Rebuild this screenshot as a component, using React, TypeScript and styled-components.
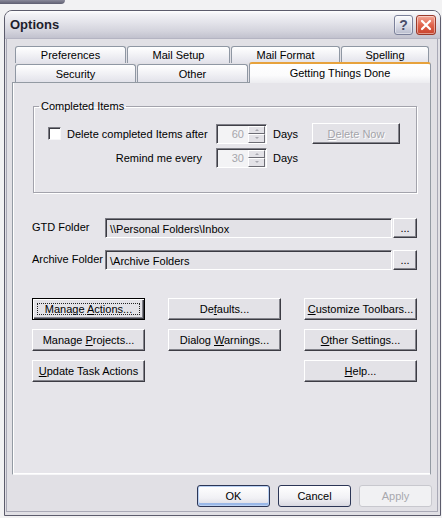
import type { ReactNode } from "react";
import styled, { createGlobalStyle } from "styled-components";

const GlobalStyle = createGlobalStyle`
  html, body {
    margin: 0;
    padding: 0;
  }
  body {
    background: #f2f2f3;
    font-family: "Liberation Sans", Arial, sans-serif;
    font-size: 11px;
    color: #000;
  }
  * {
    box-sizing: border-box;
  }
`;

const topTabs = [
    { label: "Preferences", width: 111 },
    { label: "Mail Setup", width: 103 },
    { label: "Mail Format", width: 109 },
    { label: "Spelling", width: 88 },
];

const bottomTabs = [
    { label: "Security", width: 121 },
    { label: "Other", width: 111 },
];

function Spin({ value }: { value: string }) {
    return (
        <Spinner>
            <SpinInput>{value}</SpinInput>
            <SpinArrows>
                <SpinArrow>
                    <Triangle $up />
                </SpinArrow>
                <SpinArrow>
                    <Triangle />
                </SpinArrow>
            </SpinArrows>
        </Spinner>
    );
}

function Button({
    children,
    isDefault,
    disabled,
}: {
    children: ReactNode;
    isDefault?: boolean;
    disabled?: boolean;
}) {
    return (
        <ClassicButton $default={isDefault} $disabled={disabled}>
            {isDefault ? (
                <FocusRing>
                    <span>{children}</span>
                </FocusRing>
            ) : (
                <span>{children}</span>
            )}
        </ClassicButton>
    );
}

function App() {
    return (
        <Page>
            <GlobalStyle />
            <TopStrip />
            <Window>
                <TitleBar>
                    <Title>Options</Title>
                    <CaptionButton $variant="help">?</CaptionButton>
                    <CaptionButton $variant="close">
                        <svg width="12" height="12" viewBox="0 0 12 12">
                            <path d="M2 2 L10 10 M10 2 L2 10" stroke="#fff" strokeWidth="2.2" strokeLinecap="round" />
                        </svg>
                    </CaptionButton>
                </TitleBar>
                <Body>
                    <TabRows>
                        <TabRow $height={17}>
                            {topTabs.map((t) => (
                                <Tab key={t.label} $width={t.width}>
                                    {t.label}
                                </Tab>
                            ))}
                        </TabRow>
                        <TabRow $height={18}>
                            {bottomTabs.map((t) => (
                                <Tab key={t.label} $width={t.width}>
                                    {t.label}
                                </Tab>
                            ))}
                            <SelectedTab>Getting Things Done</SelectedTab>
                        </TabRow>
                    </TabRows>
                    <Panel>
                        <GroupBox>
                            <Legend>Completed Items</Legend>
                            <GroupGrid>
                                <CheckLabel>
                                    <CheckBox />
                                    <span>Delete completed Items after</span>
                                </CheckLabel>
                                <Spin value="60" />
                                <span>Days</span>
                                <Button disabled>
                                    <u>D</u>elete Now
                                </Button>
                                <RightLabel>Remind me every</RightLabel>
                                <Spin value="30" />
                                <span>Days</span>
                            </GroupGrid>
                        </GroupBox>
                        <FolderGrid>
                            <FolderLabel>GTD Folder</FolderLabel>
                            <FolderBox>\\Personal Folders\Inbox</FolderBox>
                            <Button>...</Button>
                            <FolderLabel>Archive Folder</FolderLabel>
                            <FolderBox>\Archive Folders</FolderBox>
                            <Button>...</Button>
                        </FolderGrid>
                        <ActionGrid>
                            <Button isDefault>
                                Manage <u>A</u>ctions...
                            </Button>
                            <Button>
                                De<u>f</u>aults...
                            </Button>
                            <Button>
                                <u>C</u>ustomize Toolbars...
                            </Button>
                            <Button>
                                Manage <u>P</u>rojects...
                            </Button>
                            <Button>
                                Dialog <u>W</u>arnings...
                            </Button>
                            <Button>
                                <u>O</u>ther Settings...
                            </Button>
                            <Button>
                                <u>U</u>pdate Task Actions
                            </Button>
                            <span />
                            <Button>
                                <u>H</u>elp...
                            </Button>
                        </ActionGrid>
                    </Panel>
                    <Footer>
                        <XPButton $default>OK</XPButton>
                        <XPButton>Cancel</XPButton>
                        <XPButton $disabled>Apply</XPButton>
                    </Footer>
                </Body>
            </Window>
        </Page>
    );
}

export default App;

const Page = styled.div`
    width: 442px;
    height: 518px;
    padding-left: 4px;
    overflow: hidden;
`;

const TopStrip = styled.div`
    width: 65px;
    height: 4px;
    margin-left: -4px;
    background: linear-gradient(to bottom, #8a8a9a, #5e5e70);
    border-radius: 0 0 4px 0;
`;

const Window = styled.div`
    margin-top: 6px;
    width: 437px;
    height: 506px;
    border: 1px solid #5c5c6c;
    border-radius: 8px 8px 0 0;
    background: #e1e0e5;
    display: flex;
    flex-direction: column;
    overflow: hidden;
`;

const TitleBar = styled.div`
    height: 28px;
    flex-shrink: 0;
    display: flex;
    align-items: center;
    gap: 3px;
    padding: 0 4px 0 5px;
    background: linear-gradient(
        to bottom,
        #ffffff 0%,
        #f2f2f6 12%,
        #e2e2e9 45%,
        #d3d3dc 75%,
        #c2c2ce 100%
    );
    border-bottom: 1px solid #b4b4c2;
`;

const Title = styled.div`
    flex: 1;
    font-size: 13px;
    font-weight: bold;
    color: #1e1e2c;
`;

const CaptionButton = styled.div<{ $variant: "help" | "close" }>`
    width: ${(p) => (p.$variant === "help" ? 19 : 20)}px;
    height: 20px;
    border-radius: 3px;
    display: flex;
    align-items: center;
    justify-content: center;
    font-size: 14px;
    font-weight: bold;
    color: #4a4e6a;
    border: 1px solid ${(p) => (p.$variant === "help" ? "#7b809a" : "#9a3a2a")};
    background: ${(p) =>
        p.$variant === "help"
            ? "linear-gradient(to bottom, #fbfbfd, #d6d8e4 60%, #b8bccd)"
            : "linear-gradient(to bottom, #f3a898, #e0644c 50%, #c9432d)"};
    box-shadow: inset 0 0 0 1px rgba(255, 255, 255, 0.45);
`;

const Body = styled.div`
    flex: 1;
    display: flex;
    flex-direction: column;
    margin: 0 2px 3px 1px;
    border: 1px solid #a9a9b6;
    border-top: none;
    padding: 7px 6px 0 5px;
`;

const TabRows = styled.div`
    display: flex;
    flex-direction: column;
    gap: 1px;
    padding-left: 3px;
`;

const TabRow = styled.div<{ $height: number }>`
    display: flex;
    align-items: flex-start;
    gap: 1px;
    height: ${(p) => p.$height}px;
`;

const Tab = styled.div<{ $width: number }>`
    width: ${(p) => p.$width}px;
    height: 100%;
    display: flex;
    align-items: center;
    justify-content: center;
    border: 1px solid #8f97a3;
    border-bottom: none;
    border-radius: 3px 3px 0 0;
    background: linear-gradient(to bottom, #ffffff, #f1f1f5 50%, #e2e2ea);
    color: #000;
`;

const SelectedTab = styled.div`
    position: relative;
    z-index: 1;
    width: 182px;
    height: 21px;
    margin-top: -2px;
    display: flex;
    align-items: center;
    justify-content: center;
    padding-bottom: 2px;
    border: 1px solid #8f97a3;
    border-top: 2px solid #e7a23c;
    border-bottom: none;
    border-radius: 3px 3px 0 0;
    background: linear-gradient(to bottom, #ffffff, #fbfbfc 60%, #ececf0);
`;

const Panel = styled.div`
    flex: 1;
    display: flex;
    flex-direction: column;
    background: #e6e5ea;
    border: 1px solid #939aa3;
    border-bottom-color: #f6f6f8;
    box-shadow: inset 1px 0 0 #ffffff, inset 0 -1px 0 #ffffff;
    padding: 17px 13px 0 20px;
`;

const GroupBox = styled.fieldset`
    margin: 0;
    min-inline-size: 0;
    padding: 10px 0 24px 14px;
    border: 1px solid #a3a3ac;
    box-shadow: inset 1px 1px 0 #ffffff, 1px 1px 0 #ffffff;
`;

const Legend = styled.legend`
    margin-left: -9px;
    padding: 0 2px;
    font-size: 11px;
    line-height: 13px;
`;

const GroupGrid = styled.div`
    display: grid;
    grid-template-columns: 162px 51px 33px 88px;
    grid-auto-rows: 21px;
    column-gap: 6px;
    row-gap: 3px;
    align-items: center;
`;

const CheckLabel = styled.label`
    display: flex;
    align-items: center;
    gap: 6px;
    white-space: nowrap;
`;

const CheckBox = styled.span`
    width: 13px;
    height: 13px;
    flex-shrink: 0;
    background: #ffffff;
    border: 1px solid;
    border-color: #7c7c84 #f6f6f8 #f6f6f8 #7c7c84;
    box-shadow: inset 1px 1px 0 #3c3c44;
`;

const RightLabel = styled.span`
    justify-self: end;
    padding-right: 8px;
    white-space: nowrap;
`;

const Spinner = styled.div`
    display: flex;
    width: 51px;
    height: 20px;
    border: 1px solid;
    border-color: #808088 #ffffff #ffffff #808088;
    box-shadow: inset 1px 1px 0 #404048;
    background: #f3f3f5;
`;

const SpinInput = styled.div`
    flex: 1;
    display: flex;
    align-items: center;
    justify-content: flex-end;
    padding: 1px 4px 0 0;
    color: #a6a6ac;
`;

const SpinArrows = styled.div`
    width: 18px;
    display: flex;
    flex-direction: column;
    padding: 1px 1px 0 0;
`;

const SpinArrow = styled.div`
    flex: 1;
    display: flex;
    align-items: center;
    justify-content: center;
    background: #e3e2e7;
    border: 1px solid;
    border-color: #ffffff #6c6c74 #6c6c74 #ffffff;
`;

const Triangle = styled.span<{ $up?: boolean }>`
    width: 0;
    height: 0;
    border-left: 2px solid transparent;
    border-right: 2px solid transparent;
    ${(p) => (p.$up ? "border-bottom: 2px solid #a8a8b0;" : "border-top: 2px solid #a8a8b0;")}
`;

const FolderGrid = styled.div`
    display: grid;
    grid-template-columns: 72px 287px 24px;
    grid-auto-rows: 20px;
    column-gap: 1px;
    row-gap: 12px;
    align-items: center;
    margin: 25px 0 0 -1px;
`;

const FolderLabel = styled.span`
    white-space: nowrap;
    padding-bottom: 3px;
`;

const FolderBox = styled.div`
    height: 20px;
    display: flex;
    align-items: center;
    padding: 1px 0 0 4px;
    background: #e3e2e7;
    border: 1px solid;
    border-color: #7a7a82 #ffffff #ffffff #7a7a82;
    box-shadow: inset 1px 1px 0 #3a3a42;
    white-space: nowrap;
`;

const ActionGrid = styled.div`
    display: grid;
    grid-template-columns: repeat(3, 113px);
    grid-auto-rows: 22px;
    column-gap: 23px;
    row-gap: 9px;
    margin: 28px 0 0 -1px;
`;

const ClassicButton = styled.div<{ $default?: boolean; $disabled?: boolean }>`
    height: 100%;
    display: flex;
    align-items: center;
    justify-content: center;
    white-space: nowrap;
    background: #e3e2e7;
    color: ${(p) => (p.$disabled ? "#a4a4aa" : "#000")};
    text-shadow: ${(p) => (p.$disabled ? "1px 1px 0 #ffffff" : "none")};
    border: 1px solid;
    border-color: ${(p) => (p.$default ? "#000" : "#ffffff #3c3c44 #3c3c44 #ffffff")};
    box-shadow: ${(p) =>
        p.$default
            ? "inset 1px 1px 0 #ffffff, inset -1px -1px 0 #3c3c44, inset -2px -2px 0 #84848c"
            : "inset -1px -1px 0 #84848c"};
`;

const FocusRing = styled.span`
    display: flex;
    align-items: center;
    justify-content: center;
    width: calc(100% - 8px);
    height: calc(100% - 8px);
    border: 1px dotted #222;
`;

const Footer = styled.div`
    height: 36px;
    flex-shrink: 0;
    display: flex;
    justify-content: flex-end;
    align-items: flex-start;
    gap: 8px;
    padding-top: 10px;
    margin-right: -1px;
`;

const XPButton = styled.div<{ $default?: boolean; $disabled?: boolean }>`
    width: 73px;
    height: 22px;
    display: flex;
    align-items: center;
    justify-content: center;
    border-radius: 3px;
    border: 1px solid ${(p) => (p.$disabled ? "#c8c8ce" : "#2c3656")};
    color: ${(p) => (p.$disabled ? "#a8a8ae" : "#000")};
    background: ${(p) =>
        p.$disabled
            ? "#f1f1f3"
            : "linear-gradient(to bottom, #ffffff, #f1f1f5 60%, #d9d9e2)"};
    box-shadow: ${(p) =>
        p.$default ? "inset 0 0 0 1px #b9d0f2, inset 0 -2px 0 1px #9ab8e8" : "none"};
`;
